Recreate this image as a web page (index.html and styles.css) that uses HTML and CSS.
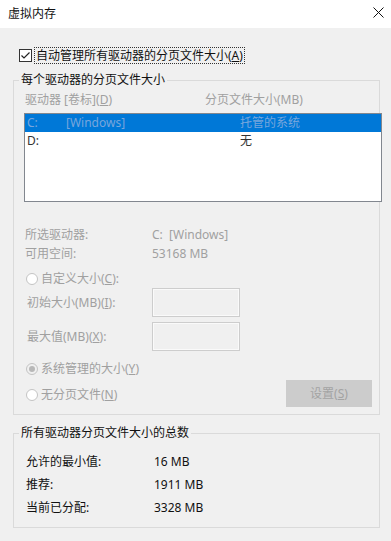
FILE: index.html
```html
<!DOCTYPE html>
<html lang="zh-CN">
<head>
    <meta charset="UTF-8">
    <meta name="viewport" content="width=device-width, initial-scale=1.0">
    <title>虚拟内存</title>
    <link rel="stylesheet" href="styles.css">
</head>
<body>
    <header class="titlebar">
        <span class="title">虚拟内存</span>
        <svg class="close" width="11" height="11" viewBox="0 0 11 11">
            <path d="M0.5 0.5 L10.5 10.5 M10.5 0.5 L0.5 10.5" stroke="#111" stroke-width="1" fill="none"/>
        </svg>
    </header>

    <main class="content">
        <div class="check-row">
            <svg class="checkbox" width="13" height="13" viewBox="0 0 13 13">
                <rect x="0.5" y="0.5" width="12" height="12" fill="#fff" stroke="#333"/>
                <path d="M2.5 6.5 L5 9 L10.5 3.5" stroke="#222" stroke-width="1.2" fill="none"/>
            </svg>
            <span class="focus-label">自动管理所有驱动器的分页文件大小(<u>A</u>)</span>
        </div>

        <fieldset class="group group-drives">
            <legend>每个驱动器的分页文件大小</legend>

            <div class="col-head disabled">
                <span class="col-drive">驱动器 [卷标](<u>D</u>)</span>
                <span>分页文件大小(MB)</span>
            </div>

            <div class="listbox">
                <div class="list-row selected">
                    <span class="cell-letter">C:</span>
                    <span class="cell-label">[Windows]</span>
                    <span>托管的系统</span>
                </div>
                <div class="list-row">
                    <span class="cell-letter">D:</span>
                    <span class="cell-label"></span>
                    <span>无</span>
                </div>
            </div>

            <div class="info disabled">
                <div class="info-row"><span class="info-key">所选驱动器:</span><span>C:&nbsp;&nbsp;[Windows]</span></div>
                <div class="info-row"><span class="info-key">可用空间:</span><span>53168 MB</span></div>
            </div>

            <div class="radio-row radio-first">
                <span class="radio"></span>
                <span class="disabled">自定义大小(<u>C</u>):</span>
            </div>

            <div class="field-row">
                <span class="field-label disabled">初始大小(MB)(<u>I</u>):</span>
                <span class="field-input"></span>
            </div>
            <div class="field-row field-second">
                <span class="field-label disabled">最大值(MB)(<u>X</u>):</span>
                <span class="field-input"></span>
            </div>

            <div class="radio-row radio-system">
                <span class="radio checked"></span>
                <span class="disabled">系统管理的大小(<u>Y</u>)</span>
            </div>

            <div class="action-row">
                <div class="radio-row">
                    <span class="radio"></span>
                    <span class="disabled">无分页文件(<u>N</u>)</span>
                </div>
                <span class="btn">设置(<u>S</u>)</span>
            </div>
        </fieldset>

        <fieldset class="group group-total">
            <legend>所有驱动器分页文件大小的总数</legend>
            <div class="total-row"><span class="total-key">允许的最小值:</span><span>16 MB</span></div>
            <div class="total-row"><span class="total-key">推荐:</span><span>1911 MB</span></div>
            <div class="total-row"><span class="total-key">当前已分配:</span><span>3328 MB</span></div>
        </fieldset>
    </main>
</body>
</html>
```

FILE: styles.css
```css
body {
    margin: 0;
    width: 391px;
    height: 541px;
    overflow: hidden;
    background-color: #f0f0f0;
    font-family: "Noto Sans", "Noto Sans CJK SC", sans-serif;
    font-size: 12px;
    line-height: 16px;
    color: #111;
}

.titlebar {
    height: 28px;
    background-color: #fff;
    display: flex;
    align-items: center;
    justify-content: space-between;
    padding: 0 7px 0 8px;
    box-sizing: border-box;
}

.title {
    margin-top: -1px;
}

.close {
    margin-top: -4px;
}

.content {
    padding: 0 11px 0 13px;
}

.disabled {
    color: #a0a0a0;
}

/* checkbox line */
.check-row {
    margin-top: 19px;
    padding-left: 6px;
    display: flex;
    align-items: center;
    height: 17px;
}

.checkbox {
    margin-right: 2px;
    flex-shrink: 0;
}

.focus-label {
    border: 1px dotted #333;
    padding: 0 1px;
    line-height: 15px;
}

/* group boxes */
.group {
    margin: 8px 0 0;
    border: 1px solid #dadada;
    padding: 4px 7px 7px 10px;
    min-width: 0;
}

.group legend {
    padding: 0 2px;
    margin-left: -5px;
    line-height: 16px;
}

.col-head {
    display: flex;
    padding-left: 1px;
}

.col-drive {
    width: 180px;
}

.listbox {
    margin-top: 5px;
    width: 358px;
    height: 89px;
    box-sizing: border-box;
    border: 1px solid #82878f;
    background-color: #fff;
}

.list-row {
    display: flex;
    height: 18px;
    line-height: 18px;
    padding-left: 2px;
    color: #333;
}

.list-row.selected {
    background-color: #0078d7;
    color: #78a6dc;
}

.cell-letter {
    width: 39px;
}

.cell-label {
    width: 174px;
}

.info {
    margin-top: 23px;
}

.info-row {
    display: flex;
    height: 19px;
    line-height: 19px;
    padding-left: 1px;
}

.info-key {
    width: 127px;
}

.radio-row {
    display: flex;
    align-items: center;
    height: 18px;
    padding-left: 2px;
}

.radio-first {
    margin-top: 7px;
}

.radio-system {
    margin-top: 9px;
}

.radio {
    width: 12px;
    height: 12px;
    box-sizing: border-box;
    border: 1px solid #c4c4c4;
    border-radius: 50%;
    background-color: #fff;
    margin-right: 3px;
    display: flex;
    align-items: center;
    justify-content: center;
}

.radio.checked {
    background-color: #f0f0f0;
}

.radio.checked::after {
    content: "";
    width: 6px;
    height: 6px;
    border-radius: 50%;
    background-color: #b8b8b8;
}

.field-row {
    display: flex;
    align-items: center;
}

.field-second {
    margin-top: 5px;
}

.field-label {
    width: 125px;
    padding-left: 3px;
}

.field-input {
    width: 88px;
    height: 29px;
    box-sizing: border-box;
    border: 1px solid #cdcdcd;
    box-shadow: inset 0 0 0 1px #fafafa;
    background-color: #f0f0f0;
}

.action-row {
    margin-top: 2px;
    display: flex;
    align-items: center;
    justify-content: space-between;
}

.action-row .radio-row {
    margin-top: 2px;
}

.btn {
    width: 86px;
    height: 27px;
    line-height: 27px;
    text-align: center;
    background-color: #cccccc;
    color: #a3a3a3;
}

.group-total {
    margin-top: 10px;
    padding: 9px 7px 8px 10px;
}

.total-row {
    display: flex;
    height: 23px;
    line-height: 23px;
    padding-left: 2px;
}

.total-key {
    width: 128px;
}
```
